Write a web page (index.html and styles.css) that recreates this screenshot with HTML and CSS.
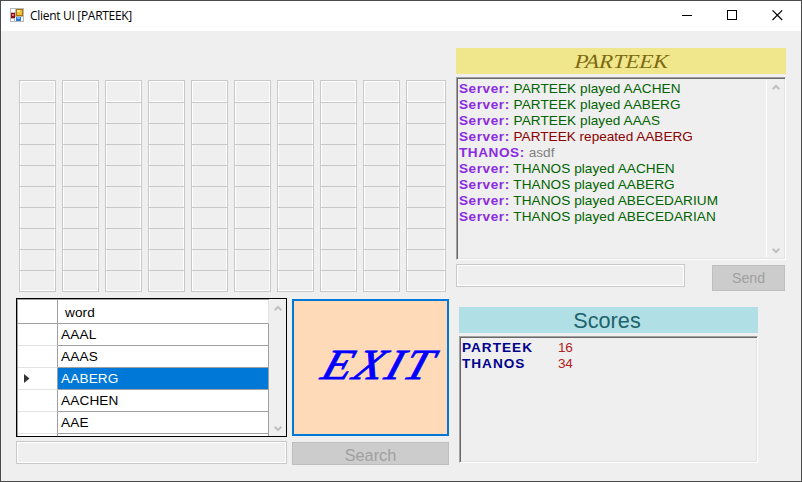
FILE: index.html
```html
<!DOCTYPE html>
<html lang="en">
<head>
<meta charset="utf-8">
<title>Client UI</title>
<link rel="stylesheet" href="styles.css">
</head>
<body>
<div class="window">
  <header class="titlebar">
    <svg class="app-icon" width="14" height="14" viewBox="0 0 14 14" shape-rendering="crispEdges">
      <rect width="14" height="14" fill="#b9b9b9"/>
      <rect x="1" y="1" width="4" height="3" fill="#fff"/>
      <rect x="1" y="11" width="3" height="2" fill="#fff"/>
      <rect x="5" y="9" width="8" height="4" fill="#fff"/>
      <rect x="1" y="5" width="4" height="5" fill="#8f0d0d"/>
      <rect x="2" y="6" width="2" height="2" fill="#e8776d"/>
      <rect x="6" y="1" width="7" height="7" fill="#a87408"/>
      <rect x="7" y="2" width="5" height="5" fill="#f3bf35"/>
      <rect x="7" y="2" width="3" height="2" fill="#ffe394"/>
      <rect x="6" y="9" width="5" height="4" fill="#2f79dc"/>
      <rect x="7" y="9" width="3" height="2" fill="#72b3ff"/>
    </svg>
    <span class="title">Client UI [PARTEEK]</span>
    <svg class="controls" width="106" height="12" viewBox="0 0 106 12" fill="none" stroke="#000">
      <path d="M0 5.5H10"/><rect x="45.5" y="0.5" width="9" height="9"/><path d="M90.5 0.3L100.2 10M100.2 0.3L90.5 10" stroke-width="1.1"/>
    </svg>
  </header>
  <main class="content">
    <section class="left">
      <div class="board" id="board"></div>
      <div class="lower">
        <div class="words">
          <div class="table">
            <div class="row head"><i></i><b>&nbsp;word</b></div>
            <div class="row"><i></i><b>AAAL</b></div>
            <div class="row"><i></i><b>AAAS</b></div>
            <div class="row selected"><i><svg width="6" height="9" viewBox="0 0 6 9"><path d="M0 0L5.5 4.5L0 9Z" fill="#333"/></svg></i><b>AABERG</b></div>
            <div class="row"><i></i><b>AACHEN</b></div>
            <div class="row"><i></i><b>AAE</b></div>
            <div class="row"><i></i><b></b></div>
          </div>
          <div class="scroll">
            <svg width="8" height="7" viewBox="0 0 8 7"><path d="M0.7 5.2L4 1.9L7.3 5.2" fill="none" stroke="#bfbfbf" stroke-width="2"/></svg>
            <svg width="8" height="7" viewBox="0 0 8 7"><path d="M0.7 1.8L4 5.1L7.3 1.8" fill="none" stroke="#bfbfbf" stroke-width="2"/></svg>
          </div>
        </div>
        <button class="exit"><span>EXIT</span></button>
        <div class="field"></div>
        <button class="btn search">Search</button>
      </div>
    </section>
    <section class="right">
      <div class="player"><span>PARTEEK</span></div>
      <div class="sunken log">
        <div class="lines">
          <p><b>Server:</b> <span>PARTEEK played AACHEN</span></p>
          <p><b>Server:</b> <span>PARTEEK played AABERG</span></p>
          <p><b>Server:</b> <span>PARTEEK played AAAS</span></p>
          <p><b>Server:</b> <span class="bad">PARTEEK repeated AABERG</span></p>
          <p><b>THANOS:</b> <span class="chat">asdf</span></p>
          <p><b>Server:</b> <span>THANOS played AACHEN</span></p>
          <p><b>Server:</b> <span>THANOS played AABERG</span></p>
          <p><b>Server:</b> <span>THANOS played ABECEDARIUM</span></p>
          <p><b>Server:</b> <span>THANOS played ABECEDARIAN</span></p>
        </div>
        <div class="scroll">
          <svg width="8" height="7" viewBox="0 0 8 7"><path d="M0.7 5.2L4 1.9L7.3 5.2" fill="none" stroke="#bfbfbf" stroke-width="2"/></svg>
          <svg width="8" height="7" viewBox="0 0 8 7"><path d="M0.7 1.8L4 5.1L7.3 1.8" fill="none" stroke="#bfbfbf" stroke-width="2"/></svg>
        </div>
      </div>
      <div class="send-row"><div class="field"></div><button class="btn send">Send</button></div>
      <div class="scores-title">Scores</div>
      <div class="sunken scores">
        <p><b>PARTEEK</b><span>16</span></p>
        <p><b>THANOS</b><span>34</span></p>
      </div>
    </section>
  </main>
</div>
<script>
document.getElementById('board').innerHTML = ('<div class="col">' + '<div class="cell"></div>'.repeat(10) + '</div>').repeat(10);
</script>
</body>
</html>
```
FILE: styles.css
```css
* { box-sizing: border-box; }
body { margin: 0; font: 13.33px "Liberation Sans", Arial, sans-serif; }
p { margin: 0; }
button { padding: 0; border-radius: 0; font-family: inherit; }
.window { width: 802px; height: 482px; border: 1px solid #4b4b4b; background: #efefef; overflow: hidden; }
.titlebar { height: 30px; background: #fff; display: flex; align-items: flex-start; padding: 7px 0 0 9px; }
.app-icon { flex: none; }
.title { margin-left: 6px; font: 12px/16px "Open Sans", sans-serif; letter-spacing: -0.3px; color: #000; white-space: nowrap; }
.controls { margin: 2px 13px 0 auto; }
.content { display: flex; align-items: flex-start; }
.left { width: 433px; margin-left: 15px; padding-top: 49px; }
.board { display: flex; gap: 6px; padding-left: 3px; }
.col { width: 37px; display: flex; flex-direction: column; border-top: 1px solid #c8c8c8; }
.col:last-child { width: 40px; }
.cell { height: 21px; border: 1px solid #c8c8c8; border-top: 0; box-shadow: inset 1px 0 #fff, inset -1px 0 #fff; }
.cell:first-child { height: 22px; box-shadow: inset 0 0 0 1px #fff; }
.cell:last-child { box-shadow: inset 1px -1px #fff, inset -1px 0 #fff; }
.lower { display: grid; grid-template-columns: 271px 157px; grid-template-rows: 139px 24px; gap: 4px 5px; margin-top: 6px; }
.words { border: 1px solid #000; display: flex; overflow: hidden; }
.table { width: 252px; background: #fff; border: 1px solid #a0a0a0; border-bottom: 0; border-right: 0; font-size: 13.6px; }
.row { display: flex; height: 22px; }
.head { height: 24px; }
.row i { width: 40px; border-right: 1px solid #a0a0a0; border-bottom: 1px solid #e3e3e3; padding: 6px 0 0 6px; font-size: 0; }
.row b { flex: 1; font-weight: 400; letter-spacing: 0.15px; border-right: 1px solid #a0a0a0; border-bottom: 1px solid #a0a0a0; padding-left: 3px; line-height: 22px; color: #000; }
.head i { border-bottom-color: #a0a0a0; }
.head b { line-height: 25px; border-right-color: #e3e3e3; }
.selected b { background: #0078d7; color: #fff; }
.scroll { display: flex; flex-direction: column; justify-content: space-between; align-items: center; }
.words .scroll { width: 17px; background: #efefef; padding: 6px 0 4px; }
.exit { height: 137px; margin-top: 1px; border: 2px solid #0078d7; background: #ffdab9; color: #00f; display: flex; align-items: center; justify-content: center; }
.exit span { font: italic 43px/46px "Liberation Serif", serif; letter-spacing: 2px; -webkit-text-stroke: 0.8px #00f; transform: skewX(-18deg) scaleX(1.12); margin-left: 16px; padding-bottom: 5px; }
.field { height: 23px; border: 1px solid #c8c8c8; box-shadow: inset 0 0 0 1px #fff; }
.btn { background: #ccc; border: 1px solid #bfbfbf; color: #a0a0a0; }
.search { height: 23px; margin-top: 1px; font-size: 16.3px; line-height: 24px; }
.right { width: 330px; margin-left: 7px; padding-top: 17px; }
.player { height: 26px; background: #f0e68c; color: #7c6a10; text-align: center; line-height: 26px; }
.player span { display: inline-block; font: italic 20px/27px "Liberation Serif", serif; transform: skewX(-4deg) scaleX(1.13); }
.sunken { border: 1px solid; border-color: #a0a0a0 #fff #fff #a0a0a0; box-shadow: inset 1px 1px #696969, inset -1px -1px #e3e3e3; }
.log { height: 183px; margin-top: 3px; display: flex; justify-content: space-between; padding: 2px 1px 2px 2px; }
.lines { white-space: nowrap; }
.lines p { height: 16px; line-height: 17px; color: #006400; font-size: 13.6px; letter-spacing: 0.06px; }
.lines b { color: #8a2be2; letter-spacing: 0.55px; }
.lines .bad { color: #8b0000; letter-spacing: 0; }
.lines .chat { color: #808080; }
.log .scroll { width: 18px; border-left: 1px solid #fff; padding: 4px 0 3px; }
.send-row { display: flex; margin-top: 4px; height: 27px; }
.send-row .field { width: 229px; margin-right: 27px; }
.send { width: 73px; height: 26px; margin-top: 1px; font-size: 14.2px; }
.scores-title { width: 299px; height: 26px; margin: 16px 0 0 3px; background: #b0e0e6; color: #21636b; text-align: center; font-size: 21.7px; line-height: 27px; padding-right: 3px; }
.scores { width: 299px; height: 127px; margin: 3px 0 0 3px; padding: 2px 0 0 2px; }
.scores p { display: flex; height: 16px; line-height: 17px; font-size: 13.6px; }
.scores b { width: 96px; color: #00008b; letter-spacing: 1px; }
.scores span { color: #b22222; letter-spacing: -0.3px; }
```
